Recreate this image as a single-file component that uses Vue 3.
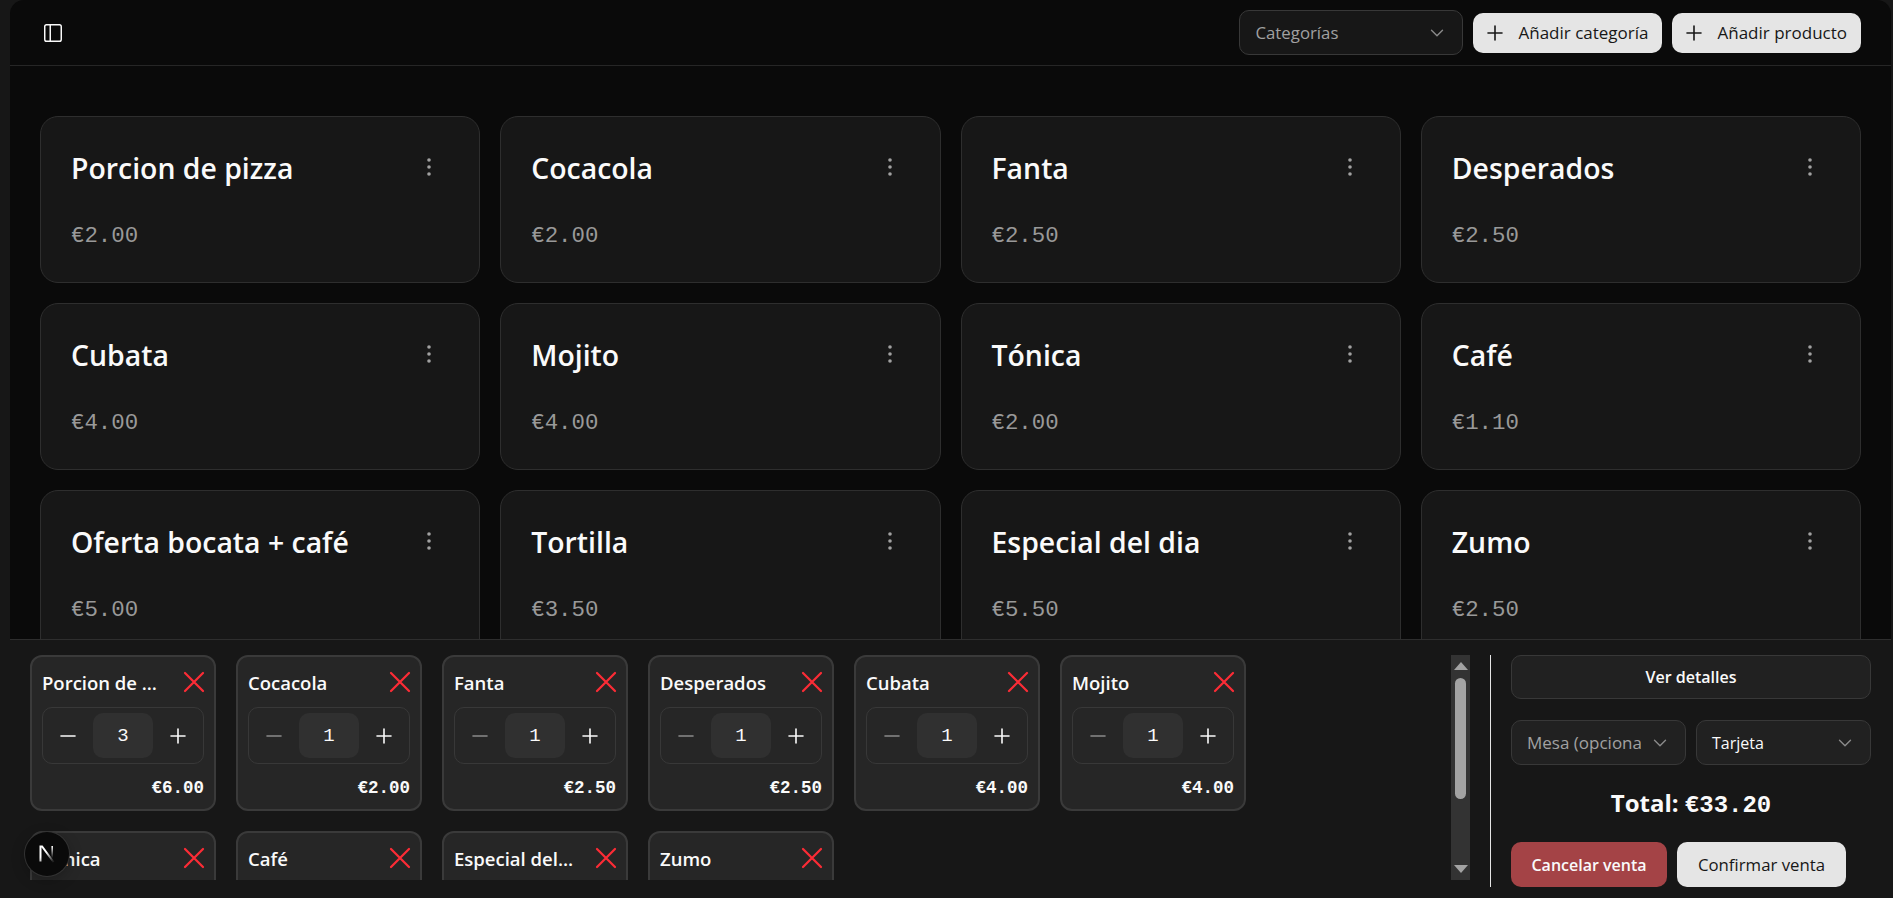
<template>
  <div class="shell">
    <main class="main">
      <header class="topbar">
        <button class="icon-btn" aria-label="Toggle sidebar">
          <svg width="22" height="22" viewBox="0 0 24 24" fill="none" stroke="currentColor" stroke-width="1.6" stroke-linecap="round" stroke-linejoin="round">
            <rect x="3" y="3" width="18" height="18" rx="2" />
            <path d="M9 3v18" />
          </svg>
        </button>
        <div class="topbar-actions">
          <div class="select select-cat">
            <span class="placeholder">Categorías</span>
            <svg class="chev" width="22" height="22" viewBox="0 0 24 24" fill="none" stroke="currentColor" stroke-width="1.5" stroke-linecap="round" stroke-linejoin="round"><path d="m6 9 6 6 6-6" /></svg>
          </div>
          <button class="btn-light btn-add">
            <svg width="24" height="24" viewBox="0 0 24 24" fill="none" stroke="currentColor" stroke-width="1.6" stroke-linecap="round"><path d="M5 12h14M12 5v14" /></svg>
            Añadir categoría
          </button>
          <button class="btn-light btn-add">
            <svg width="24" height="24" viewBox="0 0 24 24" fill="none" stroke="currentColor" stroke-width="1.6" stroke-linecap="round"><path d="M5 12h14M12 5v14" /></svg>
            Añadir producto
          </button>
        </div>
      </header>

      <section class="products">
        <article v-for="p in products" :key="p.name" class="product">
          <div class="product-head">
            <h2>{{ p.name }}</h2>
            <svg class="dots" width="24" height="24" viewBox="0 0 24 24" fill="currentColor"><circle cx="12" cy="5" r="1.8" /><circle cx="12" cy="12" r="1.8" /><circle cx="12" cy="19" r="1.8" /></svg>
          </div>
          <p class="price">€{{ p.price }}</p>
        </article>
      </section>

      <footer class="sale">
        <div class="lines">
          <div v-for="l in lines" :key="l.name" class="line">
            <div class="line-head">
              <span class="line-name">{{ l.name }}</span>
              <svg class="remove" width="24" height="24" viewBox="4 4 16 16" fill="none" stroke="currentColor" stroke-width="1.5" stroke-linecap="round" stroke-linejoin="round"><path d="M18 6 6 18M6 6l12 12" /></svg>
            </div>
            <div class="qty">
              <svg :class="{ dim: l.qty === 1 }" width="24" height="24" viewBox="0 0 24 24" fill="none" stroke="currentColor" stroke-width="1.6" stroke-linecap="round"><path d="M5 12h14" /></svg>
              <span class="qty-val">{{ l.qty }}</span>
              <svg width="24" height="24" viewBox="0 0 24 24" fill="none" stroke="currentColor" stroke-width="1.6" stroke-linecap="round"><path d="M5 12h14M12 5v14" /></svg>
            </div>
            <div class="line-total">€{{ l.total }}</div>
          </div>
        </div>

        <div class="scrollbar">
          <span class="arrow up"></span>
          <span class="thumb"></span>
          <span class="arrow down"></span>
        </div>

        <div class="divider"></div>

        <div class="summary">
          <button class="btn-details">Ver detalles</button>
          <div class="selects">
            <div class="select">
              <span class="placeholder clip">Mesa (opcional)</span>
              <svg class="chev" width="22" height="22" viewBox="0 0 24 24" fill="none" stroke="currentColor" stroke-width="1.5" stroke-linecap="round" stroke-linejoin="round"><path d="m6 9 6 6 6-6" /></svg>
            </div>
            <div class="select">
              <span>Tarjeta</span>
              <svg class="chev" width="22" height="22" viewBox="0 0 24 24" fill="none" stroke="currentColor" stroke-width="1.5" stroke-linecap="round" stroke-linejoin="round"><path d="m6 9 6 6 6-6" /></svg>
            </div>
          </div>
          <div class="total">Total: <span class="mono">€33.20</span></div>
          <div class="sale-actions">
            <button class="btn-cancel">Cancelar venta</button>
            <button class="btn-light btn-confirm">Confirmar venta</button>
          </div>
        </div>
      </footer>

      <div class="next-badge">
        <svg width="18" height="18" viewBox="0 0 18 18" fill="none">
          <defs>
            <linearGradient id="nDiag" x1="3" y1="2" x2="15" y2="16" gradientUnits="userSpaceOnUse">
              <stop offset="0.4" stop-color="#fff" />
              <stop offset="1" stop-color="#fff" stop-opacity="0.1" />
            </linearGradient>
            <linearGradient id="nRight" x1="14" y1="1" x2="14" y2="13" gradientUnits="userSpaceOnUse">
              <stop offset="0" stop-color="#fff" />
              <stop offset="1" stop-color="#fff" stop-opacity="0" />
            </linearGradient>
          </defs>
          <path d="M2.5 16.5V1.5h1.6L15.5 17" stroke="url(#nDiag)" stroke-width="2" />
          <path d="M14.2 1v12" stroke="url(#nRight)" stroke-width="1.6" />
        </svg>
      </div>
    </main>
  </div>
</template>

<script setup>
const products = [
  { name: 'Porcion de pizza', price: '2.00' },
  { name: 'Cocacola', price: '2.00' },
  { name: 'Fanta', price: '2.50' },
  { name: 'Desperados', price: '2.50' },
  { name: 'Cubata', price: '4.00' },
  { name: 'Mojito', price: '4.00' },
  { name: 'Tónica', price: '2.00' },
  { name: 'Café', price: '1.10' },
  { name: 'Oferta bocata + café', price: '5.00' },
  { name: 'Tortilla', price: '3.50' },
  { name: 'Especial del dia', price: '5.50' },
  { name: 'Zumo', price: '2.50' }
]

const lines = [
  { name: 'Porcion de pizza', qty: 3, total: '6.00' },
  { name: 'Cocacola', qty: 1, total: '2.00' },
  { name: 'Fanta', qty: 1, total: '2.50' },
  { name: 'Desperados', qty: 1, total: '2.50' },
  { name: 'Cubata', qty: 1, total: '4.00' },
  { name: 'Mojito', qty: 1, total: '4.00' },
  { name: 'Tónica', qty: 1, total: '2.00' },
  { name: 'Café', qty: 1, total: '1.10' },
  { name: 'Especial del dia', qty: 1, total: '5.50' },
  { name: 'Zumo', qty: 1, total: '2.50' }
]
</script>

<style>
html, body {
  margin: 0;
  height: 100%;
  overflow: hidden;
  background: #171717;
}
</style>

<style scoped>
.shell {
  height: 898px;
  padding-left: 10px;
  padding-right: 2px;
  font-family: "Open Sans", "Noto Sans", sans-serif;
  color: #fafafa;
  box-sizing: border-box;
}

.main {
  position: relative;
  height: 100%;
  display: flex;
  flex-direction: column;
  background: #0a0a0a;
  border-top-left-radius: 14px;
  border-top-right-radius: 14px;
  overflow: hidden;
}

.topbar {
  height: 66px;
  flex: none;
  box-sizing: border-box;
  display: flex;
  align-items: center;
  justify-content: space-between;
  padding: 0 30px 0 32px;
  border-bottom: 1px solid #262626;
}

.icon-btn {
  padding: 0;
  background: none;
  border: 0;
  color: #fafafa;
  display: flex;
}

.topbar-actions {
  display: flex;
  align-items: center;
  gap: 10px;
}

button {
  font-family: inherit;
}

.select {
  flex: 1;
  min-width: 0;
  height: 45px;
  box-sizing: border-box;
  display: flex;
  align-items: center;
  justify-content: space-between;
  padding: 0 14px 0 15px;
  border: 1px solid #383838;
  border-radius: 10px;
  background: #212121;
  font-size: 16px;
  color: #fafafa;
}

.select-cat {
  flex: none;
  width: 224px;
  background: #171717;
  font-size: 16.8px;
}

.placeholder {
  color: #a1a1a1;
}

.clip {
  overflow: hidden;
  white-space: nowrap;
  flex: none;
  width: 114px;
  font-size: 17px;
}

.chev {
  flex: none;
  color: #8a8a8a;
}

.btn-light {
  border: 0;
  background: #e5e5e5;
  color: #171717;
  border-radius: 10px;
  font-size: 16px;
  font-weight: 500;
}

.btn-add {
  height: 40px;
  display: flex;
  align-items: center;
  gap: 11px;
  padding: 0 14px 0 10px;
  font-size: 17px;
  white-space: nowrap;
}

.products {
  flex: 1;
  min-height: 0;
  overflow: hidden;
  display: grid;
  grid-template-columns: repeat(4, 1fr);
  grid-auto-rows: 167px;
  gap: 20px;
  padding: 50px 30px 0;
}

.product {
  box-sizing: border-box;
  padding: 31px 30px;
  border: 1px solid #2e2e2e;
  border-radius: 18px;
  background: #171717;
}

.product-head {
  display: flex;
  align-items: center;
  justify-content: space-between;
}

.product h2 {
  margin: 0;
  font-size: 28.4px;
  font-weight: 600;
  line-height: 40px;
}

.dots {
  color: #a1a1a1;
  margin-top: -2px;
  margin-right: 8px;
}

.price {
  margin: 32px 0 0;
  font-family: "Liberation Mono", monospace;
  font-size: 22.4px;
  line-height: 32px;
  color: #999999;
}

.sale {
  height: 259px;
  flex: none;
  box-sizing: border-box;
  display: flex;
  padding: 15px 20px 11px;
  background: #171717;
  border-top: 1px solid #2e2e2e;
}

.lines {
  width: 1421px;
  height: 225px;
  flex: none;
  overflow: hidden;
  display: flex;
  flex-wrap: wrap;
  align-content: flex-start;
  gap: 20px;
}

.line {
  width: 186px;
  height: 156px;
  box-sizing: border-box;
  padding: 11px 10px 0;
  border: 2px solid #3a3a3a;
  border-radius: 12px;
  background: #262626;
}

.line-head {
  display: flex;
  align-items: center;
  justify-content: space-between;
  height: 28px;
}

.line-name {
  max-width: 120px;
  font-size: 18.5px;
  font-weight: 600;
  white-space: nowrap;
  overflow: hidden;
  text-overflow: ellipsis;
}

.remove {
  flex: none;
  color: #fb2c36;
  margin-right: -2px;
}

.qty {
  margin-top: 11px;
  height: 57px;
  box-sizing: border-box;
  display: flex;
  align-items: center;
  justify-content: space-between;
  padding: 5px 13px;
  border: 1px solid #383838;
  border-radius: 10px;
  color: #fafafa;
}

.qty .dim {
  color: #8a8a8a;
}

.qty-val {
  width: 60px;
  height: 45px;
  display: flex;
  align-items: center;
  justify-content: center;
  border-radius: 10px;
  background: #303030;
  font-family: "Liberation Mono", monospace;
  font-size: 19px;
}

.line-total {
  margin-top: 12px;
  text-align: right;
  font-family: "Liberation Mono", monospace;
  font-weight: 700;
  font-size: 17.5px;
  line-height: 24px;
}

.scrollbar {
  width: 19px;
  height: 225px;
  flex: none;
  margin-left: 0;
  position: relative;
  display: flex;
  flex-direction: column;
  align-items: center;
  background: #333333;
}

.arrow {
  position: absolute;
  width: 0;
  height: 0;
  border-left: 7px solid transparent;
  border-right: 7px solid transparent;
}

.arrow.up {
  top: 7px;
  border-bottom: 8px solid #a3a3a3;
}

.arrow.down {
  bottom: 7px;
  border-top: 8px solid #a3a3a3;
}

.thumb {
  position: absolute;
  top: 23px;
  width: 11px;
  height: 121px;
  border-radius: 6px;
  background: #a3a3a3;
}

.divider {
  width: 1px;
  height: 232px;
  flex: none;
  margin-left: 20px;
  background: #e5e5e5;
}

.summary {
  width: 360px;
  flex: none;
  margin-left: 20px;
  display: flex;
  flex-direction: column;
}

.btn-details {
  height: 44px;
  flex: none;
  border: 1px solid #383838;
  border-radius: 10px;
  background: #212121;
  color: #fafafa;
  font-size: 16px;
  font-weight: 600;
}

.selects {
  display: flex;
  gap: 10px;
  margin-top: 21px;
}

.total {
  margin-top: 19px;
  height: 38px;
  line-height: 38px;
  text-align: center;
  font-size: 24px;
  font-weight: 700;
}

.mono {
  font-family: "Liberation Mono", monospace;
}

.sale-actions {
  display: flex;
  gap: 10px;
  margin-top: 20px;
}

.sale-actions button {
  height: 45px;
  padding: 0;
  font-size: 16px;
}

.sale-actions .btn-confirm {
  font-size: 16.8px;
}

.btn-cancel {
  width: 156px;
  border: 0;
  border-radius: 10px;
  background: #a44346;
  color: #fafafa;
  font-weight: 600;
}

.btn-confirm {
  width: 169px;
}

.next-badge {
  position: absolute;
  left: 15px;
  top: 832px;
  width: 44px;
  height: 44px;
  display: flex;
  align-items: center;
  justify-content: center;
  border-radius: 50%;
  background: #0a0a0a;
  box-shadow: 0 0 0 1px #333333, 0 4px 14px rgba(0, 0, 0, 0.25);
}
</style>
